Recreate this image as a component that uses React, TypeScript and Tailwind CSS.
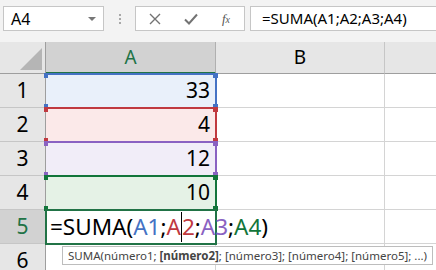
import React from "react";

const font = { fontFamily: '"Noto Sans", "Open Sans", sans-serif' };

type RangeCell = {
  value: string;
  bg: string;
  border: string;
  square: string;
  z: string;
};

const cells: RangeCell[] = [
  { value: "33", bg: "bg-[#e9f0fa]", border: "border-[#4472c4]", square: "bg-[#4472c4]", z: "z-10" },
  { value: "4", bg: "bg-[#fbe9e9]", border: "border-[#c0393f]", square: "bg-[#c0393f]", z: "z-20" },
  { value: "12", bg: "bg-[#f1edf8]", border: "border-[#8a62c2]", square: "bg-[#8a62c2]", z: "z-30" },
  { value: "10", bg: "bg-[#e5f2e6]", border: "border-[#12753a]", square: "bg-[#12753a]", z: "z-40" },
];

function RowHeader({ n, active }: { n: number; active?: boolean }) {
  return (
    <div
      className={`w-[46px] shrink-0 flex items-center justify-center border-r border-r-[#9e9e9e] border-b border-b-[#c6c6c6] text-[21px] ${
        active ? "bg-[#d2d2d2] text-[#217346]" : "bg-[#e6e6e6] text-black"
      }`}
    >
      {n}
    </div>
  );
}

function EmptyCells() {
  return (
    <>
      <div className="w-[169px] shrink-0 border-r border-b border-[#d4d4d4] bg-white" />
      <div className="flex-1 border-b border-[#d4d4d4] bg-white" />
    </>
  );
}

export default function App() {
  return (
    <div className="w-[436px] h-[270px] overflow-hidden bg-[#f3f3f3] select-none" style={font}>
      {/* formula bar */}
      <div className="h-[42px] flex items-start pt-[6px] pl-[3px]">
        <div className="w-[101px] h-[25px] bg-white border border-[#c6c6c6] flex items-center justify-between pl-[7px] pr-[7px]">
          <span className="text-[16px] text-black">A4</span>
          <span className="w-0 h-0 border-l-[4px] border-r-[4px] border-t-[4px] border-l-transparent border-r-transparent border-t-[#777]" />
        </div>
        <div className="w-[31px] h-[25px] flex flex-col items-center justify-center gap-[2px]">
          <span className="w-[2px] h-[2px] bg-[#a8a8a8]" />
          <span className="w-[2px] h-[2px] bg-[#a8a8a8]" />
          <span className="w-[2px] h-[2px] bg-[#a8a8a8]" />
        </div>
        <div className="w-[110px] h-[25px] bg-white border border-[#c6c6c6] flex items-center">
          <div className="w-[38px] flex justify-center">
            <svg width="12" height="12" viewBox="0 0 12 12">
              <path d="M1 1 L11 11 M11 1 L1 11" stroke="#737373" strokeWidth="1.4" />
            </svg>
          </div>
          <div className="w-[34px] flex justify-center">
            <svg width="14" height="12" viewBox="0 0 14 12">
              <path d="M1 6.5 L5 10.5 L13 1.5" stroke="#737373" strokeWidth="2" fill="none" />
            </svg>
          </div>
          <div className="flex-1 flex justify-center">
            <span className="text-[13px] italic text-[#555]" style={{ fontFamily: '"Liberation Serif", serif' }}>
              f<span className="text-[10px]">x</span>
            </span>
          </div>
        </div>
        <div className="w-[5px]" />
        <div className="flex-1 h-[25px] bg-white border border-[#c6c6c6] border-r-0 flex items-center pl-[11px]">
          <span className="text-[15px] text-black">=SUMA(A1;A2;A3;A4)</span>
        </div>
      </div>

      {/* column headers */}
      <div className="h-[32px] flex">
        <div className="w-[46px] shrink-0 bg-[#e6e6e6] border-r border-r-[#9e9e9e] border-b border-b-[#9e9e9e] flex items-end justify-end p-[3px]">
          <svg width="22" height="22" viewBox="0 0 22 22">
            <path d="M22 0 L22 22 L0 22 Z" fill="#b5b5b5" />
          </svg>
        </div>
        <div className="w-[170px] shrink-0 bg-[#d2d2d2] border-r border-r-[#b0b0b0] border-b-2 border-b-[#217346] flex items-center justify-center text-[19px] text-[#217346]">
          A
        </div>
        <div className="w-[169px] shrink-0 bg-[#e6e6e6] border-r border-r-[#c6c6c6] border-b border-b-[#9e9e9e] flex items-center justify-center text-[19px] text-black">
          B
        </div>
        <div className="flex-1 bg-[#e6e6e6] border-b border-b-[#9e9e9e]" />
      </div>

      {/* rows 1-4 */}
      {cells.map((c, i) => (
        <div key={i} className="h-[34px] flex">
          <RowHeader n={i + 1} />
          <div className={`relative w-[170px] shrink-0 ${c.bg} flex items-center justify-end pr-[6px] text-[21px] text-black`}>
            {c.value}
            <div className={`absolute -top-[1px] -bottom-[1px] left-0 -right-[1px] border-t-2 border-r-2 border-b-2 ${c.border} ${c.z}`}>
              <span className={`absolute -top-[2px] -left-[2px] w-[4px] h-[5px] ${c.square}`} />
              <span className={`absolute -top-[2px] -right-[3px] w-[5px] h-[5px] ${c.square}`} />
              <span className={`absolute -bottom-[2px] -left-[2px] w-[4px] h-[5px] ${c.square}`} />
              <span className={`absolute -bottom-[2px] -right-[3px] w-[5px] h-[5px] ${c.square}`} />
            </div>
          </div>
          <EmptyCells />
        </div>
      ))}

      {/* row 5: editing */}
      <div className="h-[34px] flex">
        <RowHeader n={5} active />
        <div className="relative w-[170px] shrink-0 bg-white">
          <div className="absolute -top-[1px] -bottom-[1px] -left-[1px] -right-[1px] border-2 border-[#217346] z-50" />
          <div className="absolute left-[4px] top-0 h-full flex items-center whitespace-nowrap text-[22.5px] text-black z-[60]">
            <span>=SUMA(</span>
            <span className="text-[#4472c4]">A1</span>
            <span>;</span>
            <span className="text-[#c0393f]">A</span>
            <span className="w-px h-[30px] bg-black" />
            <span className="text-[#c0393f]">2</span>
            <span>;</span>
            <span className="text-[#8a62c2]">A3</span>
            <span>;</span>
            <span className="text-[#12753a]">A4</span>
            <span>)</span>
          </div>
        </div>
        <EmptyCells />
      </div>

      {/* row 6 */}
      <div className="relative h-[34px] flex">
        <RowHeader n={6} />
        <div className="w-[170px] shrink-0 border-r border-b border-[#d4d4d4] bg-white" />
        <EmptyCells />
        <div className="absolute left-[62px] top-[2px] h-[19px] border border-[#bdbdbd] bg-white flex items-center px-[5px] whitespace-nowrap text-[11.5px] text-[#444] z-[70]">
          SUMA(número1;&nbsp;<span className="font-bold">[número2]</span>; [número3]; [número4]; [número5]; ...)
        </div>
      </div>
    </div>
  );
}
